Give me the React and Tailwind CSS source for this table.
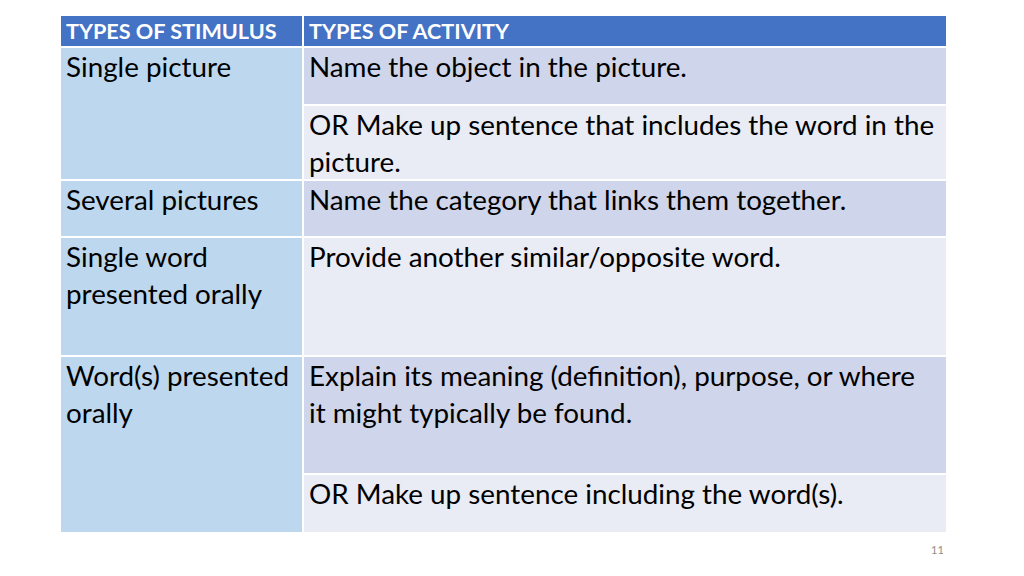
import React from 'react';

const rows = [
  { left: 'Single picture', leftSpan: 2, right: 'Name the object in the picture.', dark: true },
  { right: 'OR Make up sentence that includes the word in the picture.', dark: false },
  { left: 'Several pictures', leftSpan: 1, right: 'Name the category that links them together.', dark: true },
  { left: 'Single word presented orally', leftSpan: 1, right: 'Provide another similar/opposite word.', dark: false },
  { left: 'Word(s) presented orally', leftSpan: 2, right: 'Explain its meaning (definition), purpose, or where it might typically be found.', dark: true },
  { right: 'OR Make up sentence including the word(s).', dark: false },
];

const spanClass = { 1: 'row-span-1', 2: 'row-span-2' };

export default function App() {
  return (
    <div className="w-[1024px] h-[576px] bg-white relative" style={{ fontFamily: 'Lato, "Open Sans", sans-serif' }}>
      <div className="pt-[16px] pl-[61px]">
        <div className="grid grid-cols-[241px_642px] grid-rows-[30px_56px_73px_55px_117px_116px_57px] gap-x-[2px] gap-y-[2px] text-[27.8px] leading-[37px] text-black">
          <div className="bg-[#4472c4] text-white font-bold text-[21.6px] leading-[31px] pl-[5px] whitespace-nowrap">TYPES OF STIMULUS</div>
          <div className="bg-[#4472c4] text-white font-bold text-[21.6px] leading-[31px] pl-[5px] whitespace-nowrap">TYPES OF ACTIVITY</div>
          {rows.map((r, i) => (
            <React.Fragment key={i}>
              {r.left && (
                <div className={`bg-[#bdd7ee] pl-[5px] pr-[2px] col-start-1 ${spanClass[r.leftSpan]}`}>{r.left}</div>
              )}
              <div className={`col-start-2 pl-[5px] pr-[10px] ${r.dark ? 'bg-[#cfd5ea]' : 'bg-[#e9ebf5]'}`}>{r.right}</div>
            </React.Fragment>
          ))}
        </div>
      </div>
      <div className="absolute left-[931px] top-[542px] text-[11px] text-[#8c8c8c]">11</div>
    </div>
  );
}
